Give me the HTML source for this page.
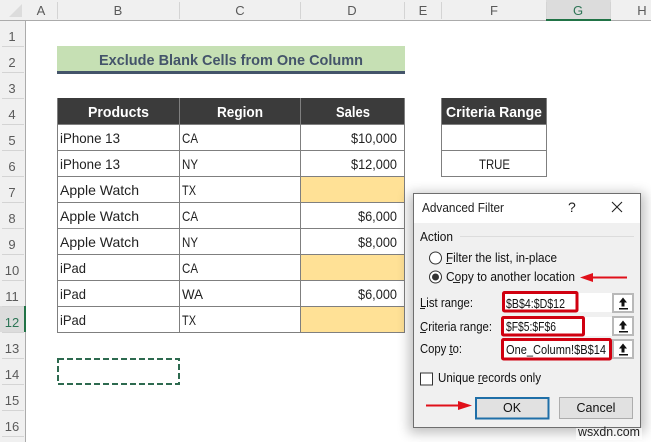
<!DOCTYPE html>
<html><head><meta charset="utf-8"><style>
html,body{margin:0;padding:0;background:#fff;width:651px;height:442px;overflow:hidden}
svg{display:block}
text{font-family:"Liberation Sans",sans-serif;font-size:14px;fill:#222}
.h{fill:#5a5a5a;font-size:13px;text-anchor:middle}
.th{fill:#fff;font-weight:bold;font-size:15px}
.d{font-size:12.5px;fill:#222}
.s{font-size:12.5px;fill:#111}
</style></head><body>
<svg width="651" height="442" viewBox="0 0 651 442" xmlns="http://www.w3.org/2000/svg">
<defs><filter id="sh" x="-20%" y="-20%" width="140%" height="140%"><feGaussianBlur stdDeviation="6"/></filter></defs>
<rect width="651" height="442" fill="#fff"/>
<!-- headers -->
<rect width="651" height="20" fill="#f0f0f0"/>
<rect width="25" height="442" fill="#f0f0f0"/>
<polygon points="22,4 22,17 9,17" fill="#dcdcdc"/>
<rect x="546" y="0" width="65" height="19" fill="#dcdcdc"/>
<rect x="0" y="306" width="24" height="26" fill="#dcdcdc"/>
<g fill="#d4d4d4">
<rect x="57" y="2" width="1" height="17"/><rect x="179" y="2" width="1" height="17"/><rect x="300" y="2" width="1" height="17"/><rect x="404" y="2" width="1" height="17"/><rect x="441" y="2" width="1" height="17"/><rect x="546" y="2" width="1" height="17"/><rect x="610" y="2" width="1" height="17"/>
<rect x="2" y="46" width="22" height="1"/><rect x="2" y="72" width="22" height="1"/><rect x="2" y="98" width="22" height="1"/><rect x="2" y="124" width="22" height="1"/><rect x="2" y="150" width="22" height="1"/><rect x="2" y="176" width="22" height="1"/><rect x="2" y="202" width="22" height="1"/><rect x="2" y="228" width="22" height="1"/><rect x="2" y="254" width="22" height="1"/><rect x="2" y="280" width="22" height="1"/><rect x="2" y="306" width="22" height="1"/><rect x="2" y="332" width="22" height="1"/><rect x="2" y="358" width="22" height="1"/><rect x="2" y="384" width="22" height="1"/><rect x="2" y="410" width="22" height="1"/><rect x="2" y="436" width="22" height="1"/>
</g>
<rect x="0" y="20" width="651" height="1" fill="#ababab"/>
<rect x="25" y="20" width="1" height="422" fill="#ababab"/>
<rect x="546" y="19" width="65" height="2" fill="#217346"/>
<rect x="24" y="306" width="2" height="26" fill="#217346"/>
<text class="h" x="41" y="15">A</text><text class="h" x="118" y="15">B</text><text class="h" x="240" y="15">C</text><text class="h" x="352" y="15">D</text><text class="h" x="423" y="15">E</text><text class="h" x="494" y="15">F</text><text class="h" x="578" y="15" style="fill:#2e7556">G</text><text class="h" x="642" y="15">H</text>
<text class="h" x="12" y="41">1</text><text class="h" x="12" y="67">2</text><text class="h" x="12" y="93">3</text><text class="h" x="12" y="119">4</text><text class="h" x="12" y="145">5</text><text class="h" x="12" y="171">6</text><text class="h" x="12" y="197">7</text><text class="h" x="12" y="223">8</text><text class="h" x="12" y="249">9</text><text class="h" x="12" y="275">10</text><text class="h" x="12" y="301">11</text><text class="h" x="12" y="327" style="fill:#2e7556">12</text><text class="h" x="12" y="353">13</text><text class="h" x="12" y="379">14</text><text class="h" x="12" y="405">15</text><text class="h" x="12" y="431">16</text>
<!-- title -->
<rect x="57" y="46" width="348" height="25" fill="#c6e0b4"/>
<rect x="57" y="71" width="348" height="3" fill="#44546a"/>
<text x="99" y="65" textLength="264" lengthAdjust="spacingAndGlyphs" style="font-weight:bold;font-size:15px;fill:#44546a">Exclude Blank Cells from One Column</text>
<!-- table -->
<rect x="57" y="98" width="348" height="26" fill="#3b3b3b"/>
<rect x="441" y="98" width="105" height="26" fill="#3b3b3b"/>
<g fill="#ffe196"><rect x="300" y="176" width="105" height="26"/><rect x="300" y="254" width="105" height="26"/><rect x="300" y="306" width="105" height="26"/></g>
<g stroke="#7f7f7f" stroke-width="1" fill="none" shape-rendering="crispEdges">
<path d="M57.5 98V332.500M179.500 98V332.500M300.500 98V332.500M404.500 98V332.500M57 124.500H405M57 150.500H405M57 176.500H405M57 202.500H405M57 228.500H405M57 254.500H405M57 280.500H405M57 306.500H405M57 332.500H405"/>
<path d="M441.500 98V176.500M546.500 98V176.500M441 124.500H547M441 150.500H547M441 176.500H547"/>
</g>
<text class="th" x="88" y="117" textLength="61" lengthAdjust="spacingAndGlyphs">Products</text>
<text class="th" x="217" y="117" textLength="46" lengthAdjust="spacingAndGlyphs">Region</text>
<text class="th" x="336" y="117" textLength="34" lengthAdjust="spacingAndGlyphs">Sales</text>
<text class="th" x="446" y="117" textLength="96" lengthAdjust="spacingAndGlyphs">Criteria Range</text>
<text x="60" y="143" textLength="60" lengthAdjust="spacingAndGlyphs">iPhone 13</text>
<text x="60" y="169" textLength="60" lengthAdjust="spacingAndGlyphs">iPhone 13</text>
<text x="60" y="195" textLength="79" lengthAdjust="spacingAndGlyphs">Apple Watch</text>
<text x="60" y="221" textLength="79" lengthAdjust="spacingAndGlyphs">Apple Watch</text>
<text x="60" y="247" textLength="79" lengthAdjust="spacingAndGlyphs">Apple Watch</text>
<text x="60" y="273" textLength="26" lengthAdjust="spacingAndGlyphs">iPad</text>
<text x="60" y="299" textLength="26" lengthAdjust="spacingAndGlyphs">iPad</text>
<text x="60" y="325" textLength="26" lengthAdjust="spacingAndGlyphs">iPad</text>
<text x="182" y="143" textLength="16" lengthAdjust="spacingAndGlyphs">CA</text>
<text x="182" y="169" textLength="16" lengthAdjust="spacingAndGlyphs">NY</text>
<text x="182" y="195" textLength="14" lengthAdjust="spacingAndGlyphs">TX</text>
<text x="182" y="221" textLength="16" lengthAdjust="spacingAndGlyphs">CA</text>
<text x="182" y="247" textLength="16" lengthAdjust="spacingAndGlyphs">NY</text>
<text x="182" y="273" textLength="16" lengthAdjust="spacingAndGlyphs">CA</text>
<text x="182" y="299" textLength="21" lengthAdjust="spacingAndGlyphs">WA</text>
<text x="182" y="325" textLength="14" lengthAdjust="spacingAndGlyphs">TX</text>
<text x="351" y="143" textLength="46" lengthAdjust="spacingAndGlyphs">$10,000</text>
<text x="351" y="169" textLength="46" lengthAdjust="spacingAndGlyphs">$12,000</text>
<text x="358" y="221" textLength="39" lengthAdjust="spacingAndGlyphs">$6,000</text>
<text x="358" y="247" textLength="39" lengthAdjust="spacingAndGlyphs">$8,000</text>
<text x="358" y="299" textLength="39" lengthAdjust="spacingAndGlyphs">$6,000</text>
<text x="479" y="169" textLength="31" lengthAdjust="spacingAndGlyphs">TRUE</text>
<rect x="58" y="359" width="121" height="25" fill="none" stroke="#2d6a4f" stroke-width="2" stroke-dasharray="6 3"/>
<!-- dialog -->
<rect x="409" y="193" width="236" height="240" fill="#000" opacity=".25" filter="url(#sh)"/>
<rect x="413.500" y="193.500" width="227" height="234" fill="#f0f0f0" stroke="#6e6e6e"/>
<rect x="414" y="194" width="226" height="29" fill="#fff"/>
<text class="d" x="422" y="212" textLength="82" lengthAdjust="spacingAndGlyphs">Advanced Filter</text>
<text class="d" x="568" y="212" style="font-size:14px">?</text>
<path d="M612 202L622 212M622 202L612 212" stroke="#222" stroke-width="1.100" fill="none"/>
<text class="s" x="420" y="241" textLength="33" lengthAdjust="spacingAndGlyphs">Action</text>
<rect x="460" y="236" width="174" height="1" fill="#dcdcdc"/>
<circle cx="435.500" cy="258" r="6" fill="#fff" stroke="#333"/>
<text class="s" x="446" y="262" textLength="111" lengthAdjust="spacingAndGlyphs">Filter the list, in-place</text>
<rect x="446" y="263" width="6" height="1" fill="#222"/>
<circle cx="435.500" cy="277" r="6" fill="#fff" stroke="#333"/>
<circle cx="435.500" cy="277" r="3.500" fill="#333"/>
<text class="s" x="446" y="281" textLength="129" lengthAdjust="spacingAndGlyphs">Copy to another location</text>
<rect x="453" y="282" width="7" height="1" fill="#222"/>
<path d="M627 277.500H590" stroke="#e0101a" stroke-width="2" fill="none"/>
<polygon points="580,277.500 593,273 593,282" fill="#e0101a"/>
<text class="s" x="420" y="307" textLength="53" lengthAdjust="spacingAndGlyphs">List range:</text>
<rect x="420" y="308" width="5" height="1" fill="#222"/>
<text class="s" x="420" y="331" textLength="72" lengthAdjust="spacingAndGlyphs">Criteria range:</text>
<rect x="420" y="332" width="6" height="1" fill="#222"/>
<text class="s" x="420" y="353" textLength="42" lengthAdjust="spacingAndGlyphs">Copy to:</text>
<rect x="449" y="354" width="4" height="1" fill="#222"/>
<!-- inputs -->
<rect x="503" y="293" width="110" height="19" fill="#fff"/>
<rect x="503" y="317" width="110" height="19" fill="#fff"/>
<rect x="503" y="340" width="110" height="19" fill="#fff"/>
<g fill="#fff" stroke="#b9b9b9" stroke-width="2">
<rect x="613" y="294" width="20" height="18"/>
<rect x="613" y="317" width="20" height="18"/>
<rect x="613" y="340" width="20" height="18"/>
</g>
<g fill="#111">
<path d="M622 298l-4 5h2.500v4h3v-4h2.500zM618 308.500h9v1.500h-9z" transform="translate(1 -.5)"/>
<path d="M622 321l-4 5h2.500v4h3v-4h2.500zM618 331.500h9v1.500h-9z" transform="translate(1 -.5)"/>
<path d="M622 344l-4 5h2.500v4h3v-4h2.500zM618 354.500h9v1.500h-9z" transform="translate(1 -.5)"/>
</g>
<g fill="none" stroke="#d00010" stroke-width="3">
<rect x="503.500" y="292.500" width="73.500" height="18.500" rx="1"/>
<rect x="502.500" y="317.500" width="81" height="17.500" rx="1"/>
<rect x="502.500" y="339.500" width="108" height="19.500" rx="1"/>
</g>
<text class="s" x="506" y="308" textLength="59" lengthAdjust="spacingAndGlyphs">$B$4:$D$12</text>
<text class="s" x="506" y="331" textLength="50" lengthAdjust="spacingAndGlyphs">$F$5:$F$6</text>
<text class="s" x="506" y="354" textLength="100" lengthAdjust="spacingAndGlyphs">One_Column!$B$14</text>
<rect x="420.500" y="373" width="12" height="12" fill="#fff" stroke="#333"/>
<text class="s" x="438" y="382" textLength="103" lengthAdjust="spacingAndGlyphs">Unique records only</text>
<rect x="478" y="383" width="5" height="1" fill="#222"/>
<path d="M426 405.500H461" stroke="#e0101a" stroke-width="2" fill="none"/>
<polygon points="472,405.500 458,401 458,410" fill="#e0101a"/>
<rect x="476" y="398" width="72.500" height="20.500" fill="#e1e1e1" stroke="#1f6fa8" stroke-width="2"/>
<text class="s" x="512" y="412" text-anchor="middle">OK</text>
<rect x="559.500" y="397.500" width="73" height="21" fill="#e1e1e1" stroke="#adadad"/>
<text class="s" x="596" y="412" text-anchor="middle">Cancel</text>
<rect x="576" y="428" width="66" height="12" fill="#fff" opacity=".6"/>
<text x="578" y="436" textLength="62" lengthAdjust="spacingAndGlyphs" style="font-size:12.500px;fill:#222">wsxdn.com</text>
</svg>
</body></html>
